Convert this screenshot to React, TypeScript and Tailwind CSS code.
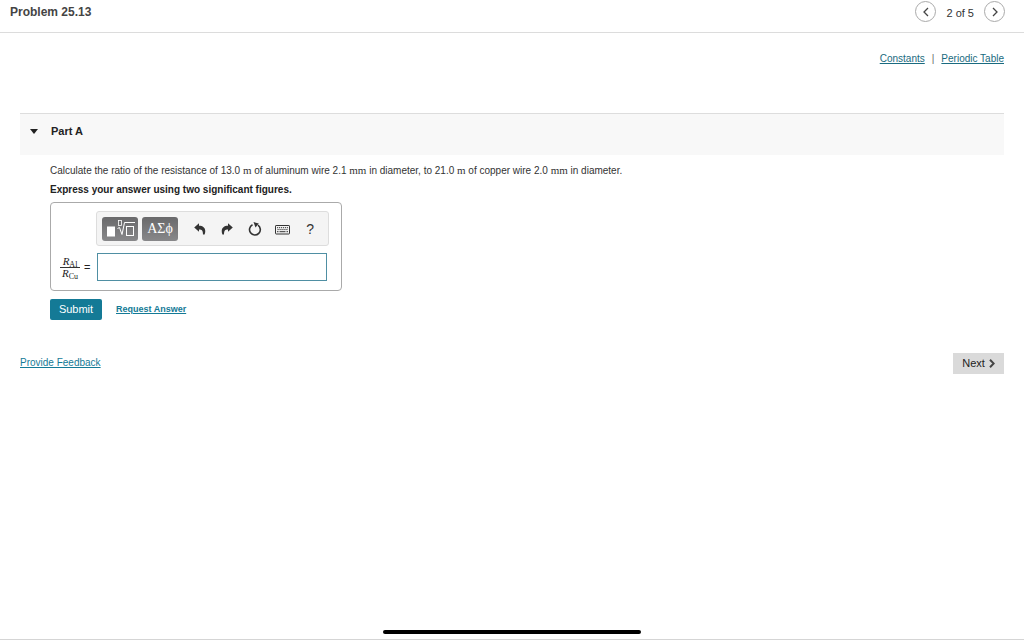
import type { ReactNode } from 'react';

const toolbarActions = [
  {
    label: 'Undo',
    icon: (
      <svg viewBox="0 0 12 12" className="h-3 w-3" fill="currentColor">
        <path d="M5 0.3 0.2 4.5 5 8.7V6.4c3 0 4 1.2 4 5.2h1.6C12.6 6 10 2.7 5 2.7z" />
      </svg>
    ),
  },
  {
    label: 'Redo',
    icon: (
      <svg viewBox="0 0 12 12" className="h-3 w-3" fill="currentColor">
        <path d="M7 0.3 11.8 4.5 7 8.7V6.4C4 6.4 3 7.6 3 11.6H1.4C-.6 6 2 2.7 7 2.7z" />
      </svg>
    ),
  },
  {
    label: 'Reset',
    icon: (
      <svg viewBox="0 0 14 14" className="h-3.5 w-3.5" fill="none" stroke="currentColor" strokeWidth="1.6">
        <path d="M10 3.2A5.4 5.4 0 1 1 4.5 2.8" />
        <path d="M5.5 0 10.8 1.6 7.5 5.4z" fill="currentColor" stroke="none" />
      </svg>
    ),
  },
  {
    label: 'Keyboard shortcuts',
    icon: (
      <svg viewBox="0 0 15 10" className="mt-0.5 h-2.5 w-[15px]" fill="none" stroke="currentColor">
        <rect x="0.5" y="0.5" width="14" height="8.5" rx="0.6" />
        <path d="M2 2.7h11M2.5 4.6h10.5" strokeDasharray="1.2 0.8" />
        <path d="M2 6.7h1.5M4.5 6.7h6M11.5 6.7H13" />
      </svg>
    ),
  },
  {
    label: 'Help',
    icon: <span className="text-sm">?</span>,
  },
];

function Unit({ children }: { children: ReactNode }) {
  return <span className="font-['Liberation_Serif',serif] text-[11px] leading-none">{children}</span>;
}

function PageHeader() {
  return (
    <header className="flex h-[33px] items-start justify-between border-b border-[#dcdcdc] pr-[19px] pl-2.5">
      <h1 className="pt-1 text-xs leading-4 font-bold text-[#444]">Problem 25.13</h1>
      <nav className="flex items-center pt-px" aria-label="Problems">
        <button type="button" aria-label="Previous problem" className="flex h-[21px] w-[21px] items-center justify-center rounded-full border border-[#aaa]">
          <svg viewBox="0 0 6 10" className="h-2.5 w-1.5" fill="none" stroke="#444" strokeWidth="1.3">
            <path d="M5 1 1 5l4 4" />
          </svg>
        </button>
        <span className="px-2.5 pt-0.5 text-[11px] leading-4 text-[#333]">2 of 5</span>
        <button type="button" aria-label="Next problem" className="flex h-[21px] w-[21px] items-center justify-center rounded-full border border-[#aaa]">
          <svg viewBox="0 0 6 10" className="h-2.5 w-1.5" fill="none" stroke="#444" strokeWidth="1.3">
            <path d="m1 1 4 4-4 4" />
          </svg>
        </button>
      </nav>
    </header>
  );
}

function EquationToolbar() {
  return (
    <div className="flex h-[35px] items-center rounded-[3px] border border-[#ddd] bg-[#f4f4f4] pr-1 pl-[5px] text-[#333]" role="toolbar" aria-label="Equation tools">
      <button type="button" aria-label="Templates" className="flex h-6 w-9 items-center justify-center rounded-[3px] bg-linear-to-b from-[#69696b] to-[#88888a]">
        <svg viewBox="0 0 30 18" className="h-[18px] w-[30px]" fill="none" stroke="#fff">
          <rect x="2" y="6.5" width="8" height="10" fill="#fff" stroke="none" />
          <path d="M12.5 8.5 14.5 7.5 17 14.5 19.5 2.5H30" />
          <rect x="13.5" y="0.5" width="3" height="5" strokeWidth="0.8" />
          <rect x="21.5" y="6.5" width="7" height="9" />
        </svg>
      </button>
      <button type="button" aria-label="Greek symbols" className="ml-1 h-6 w-9 rounded-[3px] bg-linear-to-b from-[#69696b] to-[#88888a] font-['Liberation_Serif',serif] text-sm leading-none text-white">
        ΑΣϕ
      </button>
      <div className="flex flex-1 justify-around pl-2">
        {toolbarActions.map((action) => (
          <button key={action.label} type="button" aria-label={action.label} className="flex h-6 w-6 items-center justify-center">
            {action.icon}
          </button>
        ))}
      </div>
    </div>
  );
}

function AnswerBox() {
  return (
    <div className="mt-1 w-[292px] rounded-[4px] border border-[#aaa] pt-2 pr-3 pb-[9px] pl-[9px]">
      <div className="ml-9">
        <EquationToolbar />
      </div>
      <div className="mt-[7px] flex items-center">
        <label htmlFor="answer" className="flex w-[37px] items-center gap-1 text-[11px] text-[#222]">
          <span className="flex w-5 flex-col items-center font-['Liberation_Serif',serif] leading-none">
            <span className="w-full border-b border-[#333] text-center">
              <i>R</i>
              <sub className="text-[8px]">Al</sub>
            </span>
            <span>
              <i>R</i>
              <sub className="text-[8px]">Cu</sub>
            </span>
          </span>
          <span>=</span>
        </label>
        <input id="answer" type="text" className="h-7 w-[230px] border border-[#4f8fa3] bg-white px-2 text-xs outline-none" />
      </div>
    </div>
  );
}

function PartA() {
  return (
    <section>
      <div className="h-[42px] border-t border-[#ddd] bg-[#f8f8f8] pt-[9px] pl-2.5">
        <button type="button" aria-expanded="true" className="flex items-center text-[11px] leading-4 font-bold text-[#222]">
          <svg viewBox="0 0 8 5" className="mr-[13px] h-[5px] w-2" fill="currentColor">
            <path d="M0 0h8L4 5z" />
          </svg>
          Part A
        </button>
      </div>
      <div className="pt-2 pl-[30px]">
        <p className="text-[10px] leading-4 text-[#333]">
          Calculate the ratio of the resistance of 13.0 <Unit>m</Unit> of aluminum wire 2.1 <Unit>mm</Unit> in diameter, to 21.0 <Unit>m</Unit> of copper wire 2.0 <Unit>mm</Unit> in diameter.
        </p>
        <p className="mt-[3px] text-[10px] leading-4 font-bold text-[#222]">Express your answer using two significant figures.</p>
        <AnswerBox />
        <div className="mt-2 flex items-start gap-3.5">
          <button type="button" className="h-[21px] w-[52px] rounded-[2px] bg-[#147a96] text-[11px] text-white">
            Submit
          </button>
          <a href="#answer" className="pt-0.5 text-[9px] leading-4 font-bold text-[#147a96] underline">
            Request Answer
          </a>
        </div>
      </div>
    </section>
  );
}

export default function App() {
  return (
    <div className="flex min-h-screen flex-col border-b border-[#d5d5d5] bg-white font-['Liberation_Sans',Arial,sans-serif]">
      <PageHeader />
      <main className="flex-1 px-5">
        <div className="flex justify-end gap-[7px] pt-[18px] text-[10px] leading-4">
          <a href="#constants" className="text-[#1a6b80] underline">Constants</a>
          <span className="text-[#666]">|</span>
          <a href="#periodic-table" className="text-[#1a6b80] underline">Periodic Table</a>
        </div>
        <div className="mt-[46px]">
          <PartA />
        </div>
        <div className="mt-[33px] flex items-start justify-between">
          <a href="#feedback" className="pt-0.5 text-[10px] leading-4 text-[#147a96] underline">
            Provide Feedback
          </a>
          <button type="button" className="flex h-[21px] w-[51px] items-center justify-center gap-1 bg-[#dadada] text-[11px] text-[#222]">
            Next
            <svg viewBox="0 0 6 9" className="h-[9px] w-1.5" fill="none" stroke="#444" strokeWidth="2">
              <path d="m1 .8 3.7 3.7L1 8.2" />
            </svg>
          </button>
        </div>
      </main>
      <footer className="flex justify-center pb-[5px]">
        <div className="h-1 w-[258px] rounded-full bg-black" />
      </footer>
    </div>
  );
}
